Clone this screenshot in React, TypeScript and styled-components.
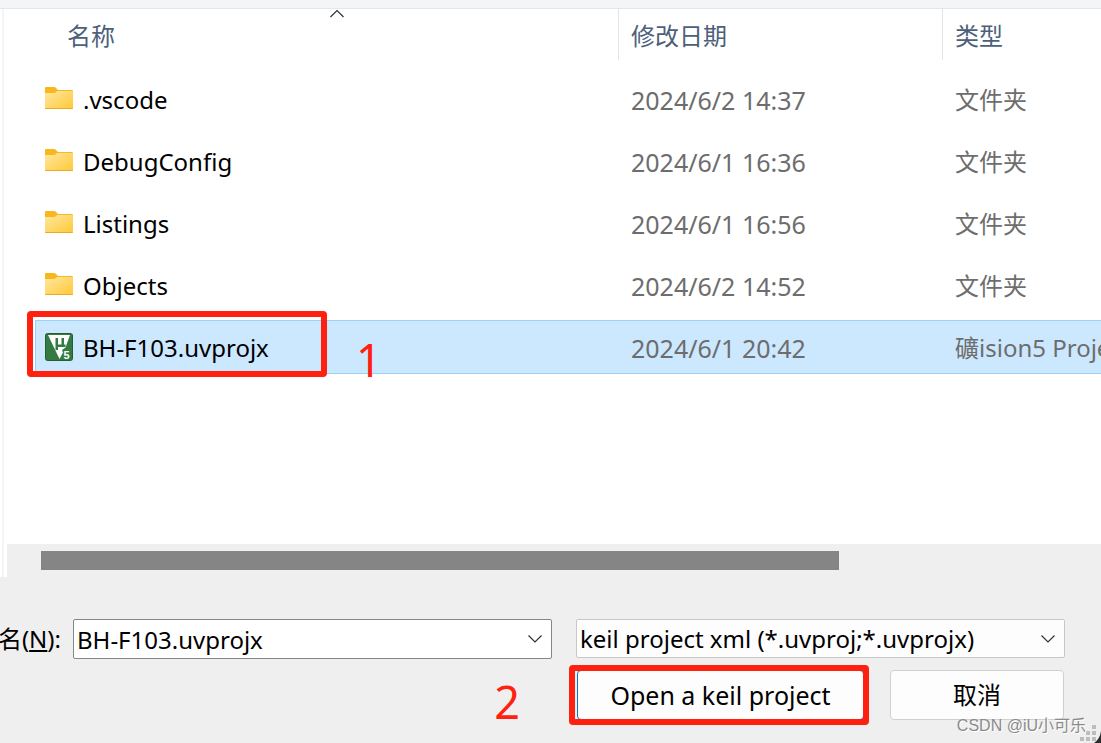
import React, { useState } from "react";
import styled, { createGlobalStyle } from "styled-components";

const GlobalStyle = createGlobalStyle`
  *, *::before, *::after { box-sizing: border-box; }
  body {
    margin: 0;
    background: #efefef;
    color: #000;
    font-family: "Noto Sans", "Noto Sans CJK SC", sans-serif;
    font-size: 24px;
    line-height: 32px;
  }
  button, input, select { font: inherit; color: inherit; margin: 0; }
`;

const Dialog = styled.main`
  display: flex;
  flex-direction: column;
  min-height: 100vh;
  overflow: hidden;
  position: relative;
`;

const TopStrip = styled.div`
  height: 9px;
  background: #f3f5f7;
  border-bottom: 1px solid #e4e7ea;
`;

const Pane = styled.section`
  flex: 1;
  display: flex;
  padding-left: 2px;
  background: #fff;
`;

const PaneBody = styled.div`
  flex: 1;
  min-width: 0;
  display: flex;
  flex-direction: column;
  border-left: 2px solid #f5f5f5;
`;

const Listing = styled.div`
  flex: 1;
  padding-left: 31px;
`;

const FileTable = styled.table`
  width: 100%;
  table-layout: fixed;
  border-collapse: collapse;
`;

const NameCol = styled.col``;
const DateCol = styled.col`
  width: 324px;
`;
const TypeCol = styled.col`
  width: 159px;
`;

const HeadRow = styled.tr`
  height: 59px;
  vertical-align: top;
`;

const HeadCell = styled.th`
  padding: 0;
  font-weight: 400;
  text-align: left;
`;

const HeadButton = styled.button<{ $first?: boolean }>`
  position: relative;
  display: block;
  width: ${(p) => (p.$first ? "calc(100% - 20px)" : "100%")};
  height: 51px;
  margin-left: ${(p) => (p.$first ? "20px" : "0")};
  padding: 2px 0 0 12px;
  border: 0;
  border-left: ${(p) => (p.$first ? "0" : "1px solid #e2e4e6")};
  background: none;
  color: #4c607a;
  text-align: left;
`;

const SortMark = styled.svg`
  position: absolute;
  top: 0;
  left: 50%;
  margin-left: -7px;
`;

const FileRow = styled.tr`
  height: 62px;
`;

const FileCell = styled.td`
  position: relative;
  padding: 0;
`;

const CellBox = styled.div<{ $selected?: boolean; $kind: "name" | "date" | "type" }>`
  display: flex;
  align-items: center;
  gap: 10px;
  height: 54px;
  padding-top: 2px;
  padding-left: ${(p) => (p.$kind === "name" ? "9px" : "13px")};
  border: solid ${(p) => (p.$selected ? "#99d1ff" : "transparent")};
  border-width: ${(p) => (p.$kind === "name" ? "1px 0 1px 1px" : "1px 0")};
  background: ${(p) => (p.$selected ? "#cce8ff" : "transparent")};
  color: ${(p) => (p.$kind === "name" ? "#000" : "#6d6d6d")};
  font-size: ${(p) => (p.$kind === "date" ? "25px" : "24px")};
  white-space: nowrap;
  overflow: hidden;
`;

const ScrollTrack = styled.div`
  display: grid;
  grid-template-columns: 798fr 262fr;
  height: 33px;
  margin-left: 3px;
  padding: 7px 0 7px 34px;
  background: #efefef;
`;

const ScrollThumb = styled.div`
  background: #858585;
`;

const Footer = styled.form`
  position: relative;
  display: grid;
  grid-template-columns: 552fr 489fr;
  gap: 11px 24px;
  padding: 42px 36px 23px 0;
`;

const NameField = styled.div`
  display: flex;
  align-items: center;
  height: 40px;
`;

const FieldLabel = styled.label`
  display: flex;
  justify-content: flex-end;
  width: 73px;
  padding-right: 12px;
  white-space: nowrap;
`;

const Combo = styled.div<{ $strong?: boolean }>`
  display: flex;
  position: relative;
  flex: 1;
  height: ${(p) => (p.$strong ? "40px" : "39px")};
  border: 1px solid ${(p) => (p.$strong ? "#868686" : "#c8c8c8")};
  border-radius: 2px;
  background: ${(p) => (p.$strong ? "#fff" : "#fdfdfd")};
`;

const NameInput = styled.input`
  flex: 1;
  min-width: 0;
  padding: 2px 0 0 3px;
  border: 0;
  outline: 0;
  background: none;
`;

const DropButton = styled.button`
  display: grid;
  place-items: center;
  width: 32px;
  padding: 0;
  border: 0;
  background: none;
`;

const TypeSelect = styled.select`
  flex: 1;
  min-width: 0;
  padding: 0 32px 0 3px;
  border: 0;
  outline: 0;
  appearance: none;
  background: none;
`;

const SelectMark = styled.span`
  position: absolute;
  top: 0;
  right: 0;
  display: grid;
  place-items: center;
  width: 32px;
  height: 100%;
  pointer-events: none;
`;

const Actions = styled.div`
  grid-column: 2;
  display: flex;
  gap: 26px;
  padding: 0 1px;
`;

const OpenSlot = styled.div`
  position: relative;
  flex: 1;
`;

const PushButton = styled.button<{ $primary?: boolean }>`
  width: ${(p) => (p.$primary ? "100%" : "174px")};
  height: 50px;
  padding: 0;
  border: 1px solid ${(p) => (p.$primary ? "#0078d4" : "#d0d0d0")};
  border-radius: 4px;
  background: #fdfdfd;
  font-size: ${(p) => (p.$primary ? "25px" : "24px")};
  white-space: nowrap;
`;

const Frame = styled.div`
  position: absolute;
  inset: -5px -5px -5px -8px;
  border: 6px solid #ff2010;
  border-radius: 4px;
  pointer-events: none;
`;

const RowFrame = styled(Frame)`
  inset: -5px auto auto -8px;
  width: 300px;
  height: 66px;
`;

const StepNumber = styled.span<{ $step: 1 | 2 }>`
  position: absolute;
  top: ${(p) => (p.$step === 1 ? "20px" : "8px")};
  ${(p) => (p.$step === 1 ? "left: 321px;" : "right: 100%; margin-right: 57px;")}
  color: #ff2010;
  font-size: 45px;
  line-height: 48px;
`;

const Watermark = styled.span`
  position: absolute;
  right: 15px;
  bottom: 5px;
  color: #8b8b8b;
  font-family: "Liberation Sans", "Noto Sans CJK SC", sans-serif;
  font-size: 16px;
  line-height: 24px;
  text-shadow: 1px 1px 0 #fff;
  white-space: nowrap;
`;

const ResizeGrip = styled.svg`
  position: absolute;
  right: 0;
  bottom: 0;
`;

const FolderIcon = () => (
  <svg width="28" height="26" viewBox="0 0 28 26" aria-hidden="true">
    <defs>
      <linearGradient id="folder" x1="0" y1="0" x2="1" y2="1">
        <stop offset="0" stopColor="#ffe7a0" />
        <stop offset="1" stopColor="#ffc937" />
      </linearGradient>
    </defs>
    <path d="M0 1Q0 0 1 0H9Q10 0 11 1L13 3H27Q28 3 28 4V10H0Z" fill="#f8b71c" />
    <path d="M0 6H9Q10 6 11 5L12 4H28V21Q28 22 27 22H1Q0 22 0 21Z" fill="url(#folder)" />
    <path d="M0 21H28Q28 22 27 22H1Q0 22 0 21Z" fill="#e9aa24" />
  </svg>
);

const ProjectIcon = () => (
  <svg width="28" height="30" viewBox="0 0 28 30" aria-hidden="true">
    <rect width="28" height="28" rx="3" fill="#235f34" />
    <rect x="1" y="1" width="26" height="26" rx="2" fill="#347b43" />
    <path d="M3 2H25L20.5 14.5L17 17L18 19.5L14.5 26Z" fill="#fff" />
    <path d="M10.5 5H13V11.5H16.5V5H19V11.5H20.5V14H13V17H10.5Z" fill="#347b43" />
    <text x="18.5" y="25.5" fill="#fff" fontFamily="Liberation Sans" fontWeight="700" fontSize="11">
      5
    </text>
  </svg>
);

const ChevronDown = () => (
  <svg width="14" height="8" viewBox="0 0 14 8" fill="none" stroke="#333" strokeWidth="1.2" aria-hidden="true">
    <path d="M.5 .5L7 7L13.5 .5" />
  </svg>
);

const files = [
  { name: ".vscode", date: "2024/6/2 14:37", type: "文件夹" },
  { name: "DebugConfig", date: "2024/6/1 16:36", type: "文件夹" },
  { name: "Listings", date: "2024/6/1 16:56", type: "文件夹" },
  { name: "Objects", date: "2024/6/2 14:52", type: "文件夹" },
  { name: "BH-F103.uvprojx", date: "2024/6/1 20:42", type: "礦ision5 Project", project: true },
];

export default function App() {
  const [fileName, setFileName] = useState("BH-F103.uvprojx");

  return (
    <Dialog>
      <GlobalStyle />
      <TopStrip />
      <Pane>
        <PaneBody>
          <Listing>
            <FileTable>
              <colgroup>
                <NameCol />
                <DateCol />
                <TypeCol />
              </colgroup>
              <thead>
                <HeadRow>
                  <HeadCell scope="col" aria-sort="ascending">
                    <HeadButton type="button" $first>
                      名称
                      <SortMark
                        width="14"
                        height="9"
                        viewBox="0 0 14 9"
                        fill="none"
                        stroke="#333"
                        strokeWidth="1.2"
                        aria-hidden="true"
                      >
                        <path d="M.5 8L7 1.5L13.5 8" />
                      </SortMark>
                    </HeadButton>
                  </HeadCell>
                  <HeadCell scope="col">
                    <HeadButton type="button">修改日期</HeadButton>
                  </HeadCell>
                  <HeadCell scope="col">
                    <HeadButton type="button">类型</HeadButton>
                  </HeadCell>
                </HeadRow>
              </thead>
              <tbody>
                {files.map((file) => (
                  <FileRow key={file.name} aria-selected={!!file.project}>
                    <FileCell>
                      <CellBox $kind="name" $selected={file.project}>
                        {file.project ? <ProjectIcon /> : <FolderIcon />}
                        {file.name}
                      </CellBox>
                      {file.project && (
                        <>
                          <RowFrame />
                          <StepNumber $step={1}>1</StepNumber>
                        </>
                      )}
                    </FileCell>
                    <FileCell>
                      <CellBox $kind="date" $selected={file.project}>
                        {file.date}
                      </CellBox>
                    </FileCell>
                    <FileCell>
                      <CellBox $kind="type" $selected={file.project}>
                        {file.type}
                      </CellBox>
                    </FileCell>
                  </FileRow>
                ))}
              </tbody>
            </FileTable>
          </Listing>
          <ScrollTrack>
            <ScrollThumb />
          </ScrollTrack>
        </PaneBody>
      </Pane>
      <Footer onSubmit={(e) => e.preventDefault()}>
        <NameField>
          <FieldLabel htmlFor="file-name">
            名(<u>N</u>):
          </FieldLabel>
          <Combo $strong>
            <NameInput id="file-name" value={fileName} onChange={(e) => setFileName(e.target.value)} />
            <DropButton type="button" aria-label="File name history">
              <ChevronDown />
            </DropButton>
          </Combo>
        </NameField>
        <Combo>
          <TypeSelect aria-label="File type">
            <option>keil project xml (*.uvproj;*.uvprojx)</option>
          </TypeSelect>
          <SelectMark>
            <ChevronDown />
          </SelectMark>
        </Combo>
        <Actions>
          <OpenSlot>
            <PushButton type="submit" $primary>
              Open a keil project
            </PushButton>
            <Frame />
            <StepNumber $step={2}>2</StepNumber>
          </OpenSlot>
          <PushButton type="button">取消</PushButton>
        </Actions>
        <ResizeGrip width="22" height="20" viewBox="0 0 22 20" aria-hidden="true">
          <path
            d="M13 2h4v4h-4zM7 8h4v4H7zM13 8h4v4h-4zM1 14h4v4H1zM7 14h4v4H7zM13 14h4v4h-4z"
            fill="#bcbcbc"
          />
          <path d="M22 8Q21 16 15 20H22Z" fill="#2c2c2c" />
        </ResizeGrip>
        <Watermark>CSDN @iU小可乐</Watermark>
      </Footer>
    </Dialog>
  );
}
